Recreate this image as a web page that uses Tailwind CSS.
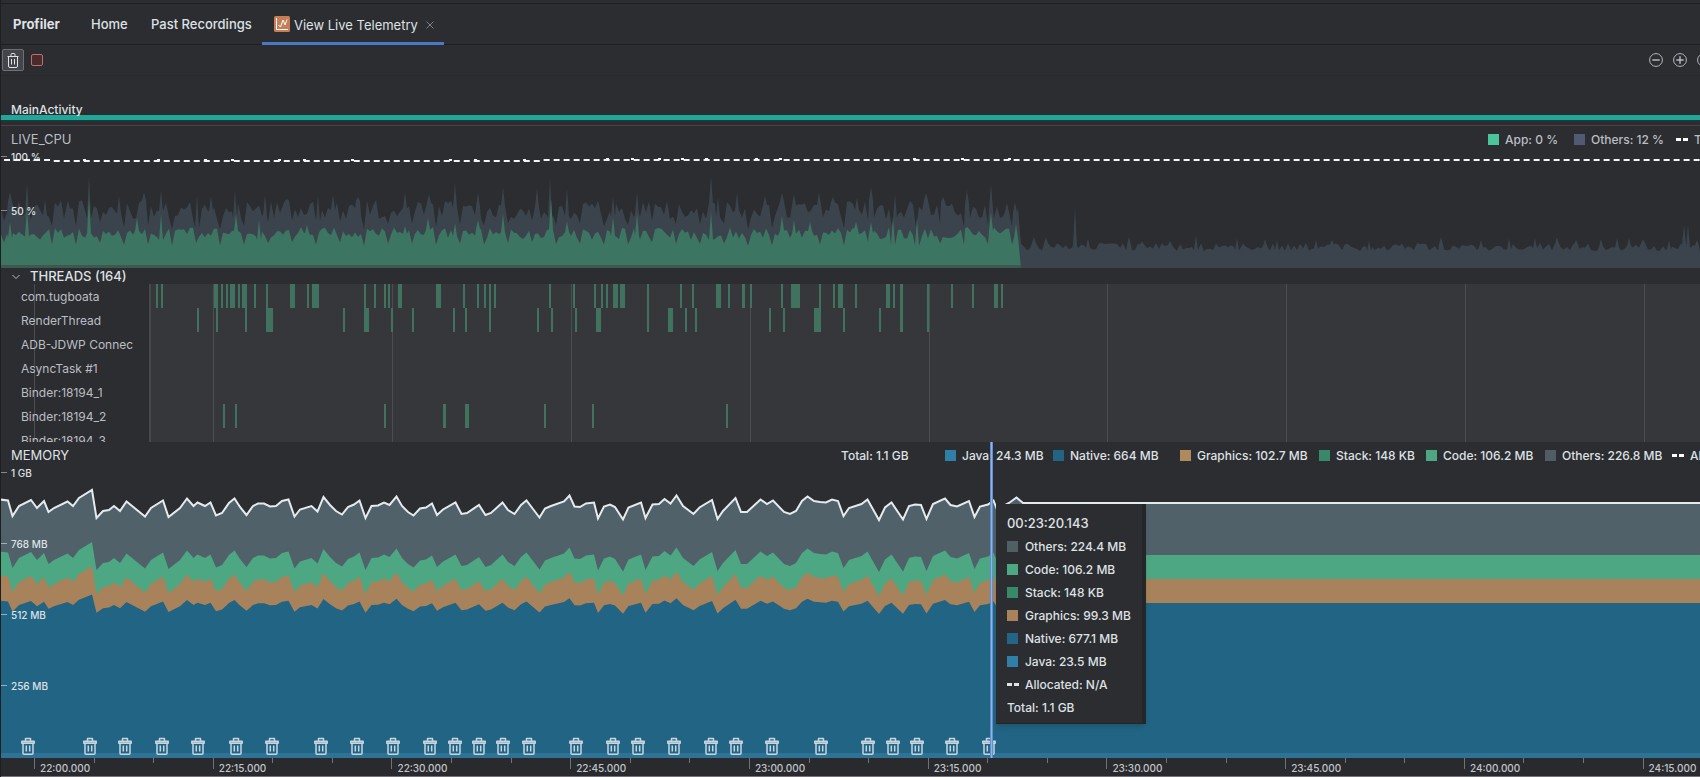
<!DOCTYPE html>
<html lang="en">
<head>
    <meta charset="UTF-8">
    <meta name="viewport" content="width=device-width, initial-scale=1.0">
    <title>Profiler</title>
    <script src="https://cdn.jsdelivr.net/npm/@tailwindcss/browser@4"></script>
</head>
<body class="bg-[#2b2d30] text-[#dfe1e5] font-['Inter','Liberation_Sans',sans-serif] text-[13px] overflow-hidden">

<!-- Shared icon -->
<svg class="hidden">
  <symbol id="trash" viewBox="0 0 14 18">
    <path fill="currentColor" fill-opacity=".6" d="M1 4h12v2H1z"/>
    <path fill="none" stroke="currentColor" stroke-width="1.5" stroke-linejoin="round" d="M4.5 4V1.5h5V4M0.8 4.2h12.4v2H0.8zM2 6.5v9.7q0 1 1 1h8q1 0 1-1V6.500"/>
    <path fill="none" stroke="currentColor" stroke-width="1.5" d="M5.300 8.500v6M8.700 8.500v6"/>
  </symbol>
</svg>

<div class="flex flex-col min-h-screen border-l border-[#1e1f22]">
  <div class="h-1 shrink-0 border-b border-[#1e1f22]"></div>

  <nav class="flex h-[41px] shrink-0 border-b border-[#1e1f22] font-medium">
    <h1 class="w-[78px] pl-3 leading-[41px] font-bold">Profiler</h1>
    <a href="#" class="w-[60px] pl-3 leading-[41px]">Home</a>
    <a href="#" class="w-[123px] pl-3 leading-[41px]">Past Recordings</a>
    <div class="flex items-center w-[182px] pl-3 h-[41px] border-b-3 border-[#4a78c4]">
      <svg class="w-4 h-4 mr-1 mt-[2px]" viewBox="0 0 16 16" fill="none">
        <rect width="16" height="16" rx="1.500" fill="#c77d55"/>
        <path stroke="#fff" d="M2.500 2v11.500H14M4.500 9l2 2 2.500-7 2 5 2-5.500"/>
      </svg>
      <a href="#" class="mt-[3px] leading-4 font-normal whitespace-nowrap" aria-current="page">View Live Telemetry</a>
      <button type="button" class="ml-auto mr-[10px] mt-[3px] text-[#7d8188]" aria-label="Close tab">
        <svg class="w-2 h-2" viewBox="0 0 8 8" fill="none"><path stroke="currentColor" d="M.5.5l7 7M7.500.5l-7 7"/></svg>
      </button>
    </div>
  </nav>

  <div class="flex items-center h-[31px] shrink-0 border-b border-[#26282b] pl-px overflow-hidden">
    <button type="button" class="flex items-center justify-center w-[22px] h-[22px] rounded-xs border border-[#6c6f74] bg-[#43454a]" aria-label="Force garbage collection">
      <svg class="w-3 h-[15px]" viewBox="0 0 12 15" fill="none" stroke="#dfe1e5"><path d="M4 3V1.500Q4 .5 5 .5h2q1 0 1 1V3M.5 3.500h11M1.500 3.500v9.500q0 1.500 1.500 1.500h6q1.500 0 1.500-1.500V3.500M4.500 6v5.500M7.500 6v5.500"/></svg>
    </button>
    <button type="button" class="w-3 h-3 ml-[7px] rounded-xs border border-[#b5716f] bg-[#4b2a2b]" aria-label="Stop"></button>
    <div class="flex gap-[10px] w-[51px] ml-auto text-[#b4b8bf]">
      <button type="button" aria-label="Zoom out"><svg class="w-[14px] h-[14px]" viewBox="0 0 14 14" fill="none" stroke="currentColor"><circle cx="7" cy="7" r="6.400"/><path stroke-width="1.500" d="M3.300 7h7.400"/></svg></button>
      <button type="button" aria-label="Zoom in"><svg class="w-[14px] h-[14px]" viewBox="0 0 14 14" fill="none" stroke="currentColor"><circle cx="7" cy="7" r="6.400"/><path stroke-width="1.500" d="M3.300 7h7.400M7 3.300v7.400"/></svg></button>
      <button type="button" aria-label="Reset zoom"><svg class="w-[14px] h-[14px]" viewBox="0 0 14 14" fill="none" stroke="currentColor"><circle cx="7" cy="7" r="6.400"/></svg></button>
    </div>
  </div>

  <!-- Activity -->
  <section class="relative flex flex-col justify-end h-[50px] shrink-0 pb-[5px] border-b border-[#4d3f46]">
    <span class="relative z-10 pl-[10px] -mb-[3px] leading-4 text-xs font-medium">MainActivity</span>
    <div class="h-[5px] bg-[#22a699] shadow-[0_1px_2px_#14453f]"></div>
  </section>

  <!-- CPU -->
  <section class="relative h-[142px] shrink-0">
    <svg id="cpuChart" class="absolute inset-0 w-full h-full" viewBox="1 126 1699 142" preserveAspectRatio="none">
      <path id="cpuOthers" fill="#3b444c"/>
      <path id="cpuApp" fill="#3c7561"/>
      <path fill="#3f4346" fill-opacity=".6" d="M0 265h1700v3H0z"/>
    </svg>
    <div class="relative flex h-[23px] pt-1 items-center pl-[10px] text-[#bcbec4]">
      <h2>LIVE_CPU</h2>
      <div class="flex w-[212px] ml-auto overflow-hidden whitespace-nowrap text-xs font-medium">
        <span class="flex items-center w-[86px] shrink-0"><i class="w-[11px] h-[11px] mr-[6px] bg-[#4bc49b]"></i>App: 0 %</span>
        <span class="flex items-center w-[102px] shrink-0"><i class="w-[11px] h-[11px] mr-[6px] bg-[#525a73]"></i>Others: 12 %</span>
        <span class="flex items-center shrink-0"><i class="w-[5px] h-[3px] mr-[2px] bg-white"></i><i class="w-[5px] h-[3px] mr-[6px] bg-white"></i>Threads: 164</span>
      </div>
    </div>
    <div class="relative text-[10px] leading-4 font-medium">
      <div class="flex items-start h-[54px]"><i class="w-[6px] mt-[7px] mr-1 border-t border-[#85888d]"></i>100 %</div>
      <div class="flex items-start h-4"><i class="w-[6px] mt-[7px] mr-1 border-t border-[#85888d]"></i>50 %</div>
    </div>
    <svg class="absolute inset-0 w-full h-full" viewBox="1 126 1699 142" preserveAspectRatio="none" fill="none">
      <path stroke="#f2f5f7" stroke-width="2" stroke-dasharray="6 4" stroke-dashoffset="7" d="M1 160H50l2 1H540l3-1H1700"/>
      <path id="cpuBumps" stroke="#f2f5f7" stroke-width="2"/>
    </svg>
  </section>

  <!-- Threads -->
  <section class="shrink-0">
    <h2 class="h-4 font-medium">
      <button type="button" class="flex items-center h-[18px] pl-[11px]" aria-expanded="true">
        <svg class="w-2 h-[6px] mr-[10px]" viewBox="0 0 8 6" fill="none" stroke="#b4b8bf"><path d="M.5 1L4 4.500 7.500 1"/></svg>THREADS (164)
      </button>
    </h2>
    <div class="relative h-[158px] overflow-hidden">
      <svg id="threadChart" class="absolute inset-0 w-full h-full" viewBox="1 0 1699 158" preserveAspectRatio="none">
        <path fill="#36373a" d="M149 0h1551v158H149z"/>
        <path fill="#46484b" d="M149 0h2v158h-2z"/>
        <path id="threadGrid" fill="#4b4d50"/>
        <path id="threadBars" fill="#40725f"/>
      </svg>
      <ul id="threadNames" class="relative w-[133px] pl-5 pt-[1px] text-xs text-[#bcbec4]"></ul>
    </div>
  </section>

  <!-- Memory -->
  <section class="relative flex flex-col flex-1 min-h-[316px]">
    <svg class="absolute inset-0 w-full h-full" viewBox="1 442 1699 316" preserveAspectRatio="none">
      <path id="memOthers" fill="#50616a"/>
      <path id="memCode" fill="#4da782"/>
      <path id="memGraphics" fill="#a8825b"/>
      <path id="memNative" fill="#226484"/>
      <path fill="#2e7396" d="M0 753h1700v5H0z"/>
      <path id="memTotal" fill="none" stroke="#e4ebee" stroke-width="2"/>
    </svg>
    <div class="relative flex h-[23px] pt-1 items-center pl-[10px]">
      <h2>MEMORY</h2>
      <div class="flex w-[859px] ml-auto overflow-hidden whitespace-nowrap text-xs font-medium">
        <span class="w-[104px] shrink-0">Total: 1.1 GB</span>
        <span class="flex items-center w-[108px] shrink-0"><i class="w-[11px] h-[11px] mr-[6px] bg-[#307fa6]"></i>Java: 24.3 MB</span>
        <span class="flex items-center w-[127px] shrink-0"><i class="w-[11px] h-[11px] mr-[6px] bg-[#226484]"></i>Native: 664 MB</span>
        <span class="flex items-center w-[139px] shrink-0"><i class="w-[11px] h-[11px] mr-[6px] bg-[#b08a5d]"></i>Graphics: 102.7 MB</span>
        <span class="flex items-center w-[107px] shrink-0"><i class="w-[11px] h-[11px] mr-[6px] bg-[#37896a]"></i>Stack: 148 KB</span>
        <span class="flex items-center w-[119px] shrink-0"><i class="w-[11px] h-[11px] mr-[6px] bg-[#4da782]"></i>Code: 106.2 MB</span>
        <span class="flex items-center w-[127px] shrink-0"><i class="w-[11px] h-[11px] mr-[6px] bg-[#505d64]"></i>Others: 226.8 MB</span>
        <span class="flex items-center shrink-0"><i class="w-[5px] h-[3px] mr-[2px] bg-white"></i><i class="w-[5px] h-[3px] mr-[6px] bg-white"></i>Allocated: N/A</span>
      </div>
    </div>
    <div class="relative flex flex-col flex-1 pb-[9px] text-[10px] leading-4 font-medium">
      <div class="flex items-start flex-1"><i class="w-[6px] mt-[7px] mr-1 border-t border-[#85888d]"></i>1 GB</div>
      <div class="flex items-start flex-1"><i class="w-[6px] mt-[7px] mr-1 border-t border-[#a4adb3]"></i>768 MB</div>
      <div class="flex items-start flex-1"><i class="w-[6px] mt-[7px] mr-1 border-t border-[#8fb3c6]"></i>512 MB</div>
      <div class="flex items-start flex-1"><i class="w-[6px] mt-[7px] mr-1 border-t border-[#8fb3c6]"></i>256 MB</div>
    </div>
    <div id="gcEvents" class="text-[#c6d5de]"></div>

    <!-- Cursor and tooltip -->
    <div class="absolute inset-y-0 left-[58.240%] w-[3px] bg-[#8db5ea] border-x border-[#5f8fce]"></div>
    <div class="absolute top-[62px] left-[58.560%] w-[150px] h-[220px] pl-[11px] pt-[8px] bg-[#2b2d30] border-r-4 border-b border-[#242628] shadow-md text-xs leading-[23px] font-medium whitespace-nowrap">
      <div class="text-[13px]">00:23:20.143</div>
      <div class="flex items-center"><i class="w-[11px] h-[11px] mr-[7px] bg-[#505f64]"></i>Others: 224.4 MB</div>
      <div class="flex items-center"><i class="w-[11px] h-[11px] mr-[7px] bg-[#4da782]"></i>Code: 106.2 MB</div>
      <div class="flex items-center"><i class="w-[11px] h-[11px] mr-[7px] bg-[#37896a]"></i>Stack: 148 KB</div>
      <div class="flex items-center"><i class="w-[11px] h-[11px] mr-[7px] bg-[#a8825b]"></i>Graphics: 99.3 MB</div>
      <div class="flex items-center"><i class="w-[11px] h-[11px] mr-[7px] bg-[#226484]"></i>Native: 677.1 MB</div>
      <div class="flex items-center"><i class="w-[11px] h-[11px] mr-[7px] bg-[#307fa6]"></i>Java: 23.5 MB</div>
      <div class="flex items-center"><i class="w-[5px] h-[3px] mr-[2px] bg-[#dfe1e5]"></i><i class="w-[5px] h-[3px] mr-[6px] bg-[#dfe1e5]"></i>Allocated: N/A</div>
      <div>Total: 1.1 GB</div>
    </div>
  </section>

  <!-- Time axis -->
  <footer id="timeAxis" class="grid grid-cols-[33px_repeat(10,10.520%)] h-[19px] shrink-0 overflow-hidden border-b border-[#77727a] bg-[#282a2d] text-[10px] leading-4 font-medium text-[#c3c5ca]">
    <div></div>
  </footer>
</div>

<script>
  const byId = (id) => document.getElementById(id);

  // ---- time axis ----
  const times = ["22:00.000", "22:15.000", "22:30.000", "22:45.000", "23:00.000", "23:15.000", "23:30.000", "23:45.000", "24:00.000", "24:15.000"];
  times.forEach(time => {
    const cell = document.createElement('div');
    cell.className = 'grid grid-cols-3 items-start whitespace-nowrap';
    cell.innerHTML = `
      <div class="h-[11px] border-l border-[#6f7276] pl-[5px] pt-[2px]">${time}</div>
      <div class="h-[5px] border-l border-[#6f7276]"></div>
      <div class="h-[5px] border-l border-[#6f7276]"></div>`;
    byId('timeAxis').appendChild(cell);
  });

  // ---- threads ----
  const threads = [
    ["com.tugboata", "156,2 161,2 214,4 221,2 226,2 230,5 238,2 242,5 254,2 266,2 290,5 307,2 312,7 364,2 374,2 384,2 388,2 398,4 436,5 463,2 477,2 484,2 489,2 494,2 549,2 573,2 594,2 601,2 606,2 613,5 620,5 647,2 680,2 692,2 716,5 728,2 742,3 750,2 781,2 791,9 819,2 833,2 838,5 855,2 886,4 893,2 900,3 927,2 951,2 972,2 994,4 1001,2"],
    ["RenderThread", "197,2 216,2 245,2 266,7 343,2 364,5 391,2 412,2 453,2 465,2 489,2 537,2 551,2 575,2 596,5 647,2 668,5 685,2 695,2 769,2 783,2 814,7 843,2 879,2 900,3 927,2"],
    ["ADB-JDWP Connec", ""],
    ["AsyncTask #1", ""],
    ["Binder:18194_1", ""],
    ["Binder:18194_2", "223,2 235,2 384,2 443,3 465,4 544,2 592,2 726,2"],
    ["Binder:18194_3", ""]
  ];
  let bars = '';
  threads.forEach(([name, runs], row) => {
    const item = document.createElement('li');
    item.className = 'h-6 leading-6 whitespace-nowrap';
    item.textContent = name;
    byId('threadNames').appendChild(item);
    runs.split(' ').filter(Boolean).forEach(run => {
      const [x, w] = run.split(',');
      bars += `M${x} ${row * 24}h${w}v24h-${w}z`;
    });
  });
  byId('threadBars').setAttribute('d', bars);
  byId('threadGrid').setAttribute('d', [34, 213, 392, 571, 750, 929, 1107, 1286, 1465, 1644].map(x => `M${x} 0h1v158h-1z`).join(''));

  // ---- cpu ----
  const noise = (n) => { const s = Math.sin(n * 127.1) * 43758.5453; return s - Math.floor(s); };
  const appSpikes = [[10, 222], [27, 208], [89, 198], [137, 218], [161, 214], [236, 214], [259, 220], [307, 225], [405, 226], [428, 218], [455, 223], [478, 220], [503, 214], [551, 198], [567, 221], [613, 217], [637, 213], [711, 211], [782, 216], [794, 220], [810, 222], [856, 222], [871, 222], [893, 217], [917, 218], [967, 227], [991, 212], [1016, 224]];
  const otherSpikes = [[10, 192], [27, 183], [45, 200], [68, 201], [89, 176], [119, 196], [144, 192], [161, 190], [197, 195], [211, 196], [235, 190], [265, 195], [287, 199], [318, 195], [333, 194], [358, 197], [405, 192], [429, 194], [455, 183], [478, 193], [503, 187], [537, 188], [550, 178], [567, 188], [613, 197], [637, 192], [711, 176], [718, 197], [737, 193], [765, 196], [782, 193], [794, 194], [819, 192], [833, 197], [857, 197], [871, 187], [895, 194], [926, 193], [943, 197], [967, 190], [991, 184], [1007, 203], [1015, 202],
    [1034, 237], [1046, 237], [1075, 207], [1088, 238], [1129, 237], [1142, 241], [1170, 241], [1196, 235], [1237, 238], [1265, 239], [1277, 240], [1316, 240], [1332, 240], [1369, 241], [1441, 237], [1481, 240], [1509, 238], [1535, 238], [1557, 237], [1576, 240], [1601, 239], [1617, 238], [1629, 238], [1643, 239], [1669, 240], [1684, 224], [1688, 224], [1697, 240]];

  function cpuPath(spikes, end, level) {
    const points = [];
    for (let x = 1; x < end; x += 3) {
      if (!spikes.some(([sx]) => Math.abs(sx - x) < 3)) points.push([x, level(x)]);
    }
    spikes.forEach(([x, y]) => {
      const foot = level(x);
      points.push([x - 2, foot], [x, y], [x + 2, foot]);
    });
    points.sort((a, b) => a[0] - b[0]);
    return `M1 268L${points.filter(p => p[0] <= end).map(p => p.join(' ')).join('L')}L${end + 2} 268z`;
  }
  // distance to the dip between two frames of work
  const dip = (x) => Math.abs(((x - 53.3 + 12) % 24 + 24) % 24 - 12);
  byId('cpuApp').setAttribute('d', cpuPath(appSpikes, 1019, x => dip(x) < 1.6 ? 246 - noise(x) * 4 : 238 - noise(x) * 11 + (dip(x) > 9 ? 2 : 0)));
  byId('cpuOthers').setAttribute('d', cpuPath(otherSpikes, 1700, x => {
    if (x > 1020) return 251 - noise(x) * 8;
    return dip(x) < 1.6 ? 230 - noise(x) * 10 : 219 - noise(x + 5) * 19;
  }));
  byId('cpuBumps').setAttribute('d', [83, 157, 204, 231, 278, 303, 351, 449, 474, 523, 546].map(x => `M${x} 160h3`).join('') + [606, 631, 658, 681, 705, 755, 779, 913, 961, 1008].map(x => `M${x} 159h3`).join(''));

  // ---- memory ----
  const total = "0,499.5 8,500.5 12.5,516 19,506 31,500 37,508 44,501 48.5,512 54,508 67.5,501.5 73,506 79,498 92,490 96.5,518 103,511 109,510 114,506 120,511 126.5,501.5 145,516.5 151,508 163,500.5 168.5,517 180,508 187,498.5 193.5,506 197.5,502.5 205,506 210.5,502.5 216,515.5 222,513 229,503 234.5,498.5 240,507 246.5,515 253,506 258,503.5 264,503.5 270,506.5 276,506 282,501 288.5,499.5 294.5,516.5 300,509.5 311.5,506 317.5,511.5 323.5,497 330,505 336,511 342,514.5 348,507 354,504.5 359.5,500.5 365.5,518 371.5,506 378,505.5 384,502.5 389.5,505 396.5,496.5 402,506 408,512 413.5,515.5 420,508.5 426,507.5 432,503.5 437,515 443,509.5 455.5,502.5 461.5,514 467,513 479,505 485.5,515 491,513 502.5,502.5 508,510 514.5,514 521,505 526.5,500.5 533,509 539.5,517.5 545,508.5 551,506 564,501.5 569.5,495.5 574.5,506.5 580,507 586,503.5 594,502.5 598,518.5 604,506.5 610,504.5 615,507 623,519.5 628.5,507.5 641,502.5 645.5,518 652.5,504.5 659,504 664.5,499 670.5,503.5 676.5,495.5 683,506 693.5,514 699.5,507.5 712,500 717.5,519 723,511 735.5,498 741,512 747,512 760.5,499.5 767,504 773,500.5 784,512 790,514 796,511 802,501 807.5,496.5 814,501 820,502 826,502.5 832,499.5 838,501 843.5,516 849,508 861.5,504 867.5,499.5 879,520 885,507.5 891.5,502.5 903,519.5 909,506 915,504.5 921,505 926.5,519 933,504 945,498.5 950.5,505 957,506.5 969,501 974.5,517 980,506.5 988,504.5 993.5,500.5 998,512 1003,506 1009,503 1016.5,497.5 1023,503 1700,503"
    .split(' ').map(p => p.split(',').map(Number));
  const layer = (shift) => `M0 758L${total.map(([x, y]) => `${x} ${shift(y)}`).join('L')}V758z`;
  byId('memOthers').setAttribute('d', layer(y => y));
  byId('memCode').setAttribute('d', layer(y => y + 52));
  byId('memGraphics').setAttribute('d', layer(y => y + 76));
  byId('memNative').setAttribute('d', layer(y => 603 + (y - 503) * .65));
  byId('memTotal').setAttribute('d', 'M' + total.map(p => p.join(' ')).join('L'));

  // garbage collections
  [27, 89, 124, 161, 197, 235, 271, 320, 356, 392, 429, 454, 478, 502, 528, 575, 612, 637, 673, 710, 735, 771, 820, 868, 893, 917, 952, 989].forEach(x => {
    byId('gcEvents').insertAdjacentHTML('beforeend', `<svg class="absolute bottom-[3px] w-[14px] h-[18px] -ml-[7px]" style="left:${x / 17}%"><use href="#trash"/></svg>`);
  });
</script>
</body>
</html>
